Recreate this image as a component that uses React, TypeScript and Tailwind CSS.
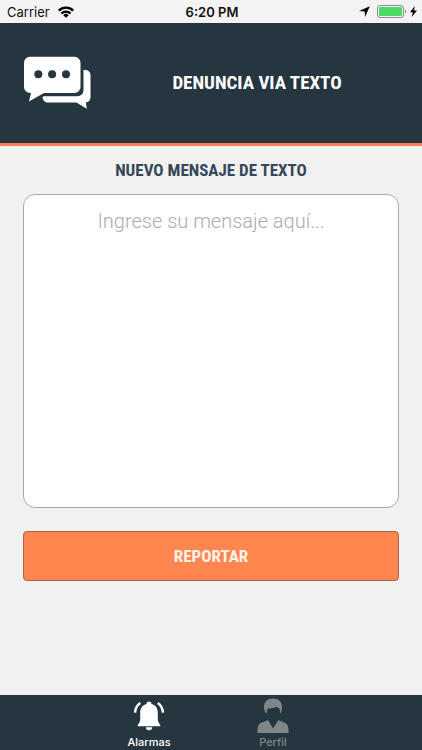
import React from 'react';

const condensed = "font-['Roboto_Condensed','Roboto',sans-serif] font-bold";

function StatusBar() {
  return (
    <div className="grid h-[23px] grid-cols-3 items-center bg-[#f3f3f3] pr-[5px] pl-[7px] font-['Inter',sans-serif] text-[13px] leading-4 text-[#111]">
      <div className="flex items-center gap-2">
        <span>Carrier</span>
        <svg width="16" height="12" viewBox="0 0 16 12" fill="none" stroke="#000" strokeWidth="2.3" aria-hidden="true">
          <path d="M0.8 4.6a10.2 10.2 0 0 1 14.4 0" />
          <path d="M3.4 7.5a6.5 6.5 0 0 1 9.2 0" />
          <path d="M8 11.8 5.3 9.2a3.8 3.8 0 0 1 5.4 0z" fill="#000" stroke="none" />
        </svg>
      </div>
      <span className="text-center font-semibold">6:20 PM</span>
      <div className="flex items-center justify-end gap-[7px]">
        <svg width="11" height="11" viewBox="0 0 11 11" aria-hidden="true">
          <path d="M10.8 0.2 6.2 10.8 5.6 5.6 0.2 5z" fill="#000" />
        </svg>
        <div className="flex items-center gap-[3px]">
          <svg width="30" height="13" viewBox="0 0 30 13" aria-hidden="true">
            <rect x="0.5" y="0.5" width="26" height="12" rx="2.5" fill="#f3f3f3" stroke="#8d8d8d" />
            <rect x="2" y="2" width="23" height="9" rx="1" fill="#4cd964" />
            <path d="M28 4.5c1.6 0.6 1.6 3.4 0 4z" fill="#8d8d8d" />
          </svg>
          <svg width="7" height="11" viewBox="0 0 7 11" aria-hidden="true">
            <path d="M4.8 0 0 6.2h2.8L1.8 11 7 4.6H4z" fill="#000" />
          </svg>
        </div>
      </div>
    </div>
  );
}

function ChatIcon() {
  return (
    <svg width="68" height="54" viewBox="0 0 68 54" fill="#fff" className="shrink-0" aria-hidden="true">
      <path d="M6 0.800h44.500a6 6 0 0 1 6 6v24.200a6 6 0 0 1-6 6H20L5 45.500 7 37H6a6 6 0 0 1-6-6V6.800a6 6 0 0 1 6-6z" />
      <path d="M59.500 14h2a5 5 0 0 1 5 5v22.500a5 5 0 0 1-4.700 5l1 6.200-10.300-6.200H24a5.500 5.500 0 0 1-5.500-5.500l1-0.800H53.500a6 6 0 0 0 6-6z" />
      <g fill="#263640">
        <circle cx="14.300" cy="18.300" r="4" />
        <circle cx="28.100" cy="18.300" r="4" />
        <circle cx="42" cy="18.300" r="4" />
      </g>
    </svg>
  );
}

function BellIcon() {
  return (
    <svg width="32" height="30" viewBox="0 0 32 30" aria-hidden="true">
      <path
        fill="#fff"
        d="M16 0.600c1.500 0 2.500 0.900 2.500 2.300 4.200 1 6.300 4.400 6.300 8.600v6c0 3.200 0.900 4.800 2.400 6.200v1.500H4.800v-1.500c1.500-1.400 2.400-3 2.400-6.200v-6c0-4.200 2.100-7.600 6.300-8.600 0-1.400 1-2.300 2.500-2.300zM12.800 26.200h6.400a3.200 3 0 0 1-6.400 0z"
      />
      <g fill="none" stroke="#fff" strokeWidth="2.500">
        <path d="M7.300 2C4.300 4 2.300 7.400 2 11.600" />
        <path d="M24.700 2c3 2 5 5.400 5.300 9.600" />
      </g>
    </svg>
  );
}

function PersonIcon() {
  return (
    <svg width="32" height="36" viewBox="0 0 32 36" fill="#808588" aria-hidden="true">
      <path d="M16 0.500c5.400 0 9 3.200 9 8.200 0 2.700-0.500 5-1.600 7.100l-1-5.600c-1.200 0-2.300-0.500-3.200-1.400-2.500 1.400-5 1.900-8.500 1.600l-1.200 5.400C7.600 13.700 7 11.400 7 8.700 7 3.700 10.600 0.500 16 0.500z" />
      <path d="M11 22 16 30.500l5.500-8.500c2.500 1.500 5.500 2.200 7.500 3.400 1.800 1 2.500 4 2.700 8.600 0 0.700-0.500 1-1 1H1.300c-0.500 0-1-0.300-1-1C0.500 29.400 1.200 26.400 3 25.400c2-1.200 5.500-1.900 8-3.400z" />
    </svg>
  );
}

export default function App() {
  return (
    <div className="flex min-h-screen flex-col bg-[#f1f1f1]">
      <StatusBar />
      <header className="flex h-[123px] items-center gap-6 border-b-[3px] border-[#f6834f] bg-[#263640] px-6">
        <ChatIcon />
        <h1 className={`${condensed} flex-1 text-center text-[19px] leading-6 text-white`}>
          DENUNCIA VIA TEXTO
        </h1>
      </header>
      <main className="flex flex-1 flex-col px-[23px] pt-3">
        <label htmlFor="mensaje" className={`${condensed} text-center text-[17px] leading-6 text-[#364858]`}>
          NUEVO MENSAJE DE TEXTO
        </label>
        <textarea
          id="mensaje"
          placeholder="Ingrese su mensaje aquí..."
          className="mt-3 block h-[314px] w-full resize-none rounded-xl border border-[#a3abb2] bg-white px-3 py-3 text-center font-['Roboto',sans-serif] text-[20px] leading-7 font-light text-[#364858] placeholder:text-[#acacac]"
        />
        <button
          type="button"
          className={`${condensed} mt-[23px] h-[50px] w-full rounded border border-[#ab6448] bg-[#ff864e] text-[17px] leading-6 text-[#fff3ea]`}
        >
          REPORTAR
        </button>
      </main>
      <nav className="flex h-[55px] justify-center gap-[60px] bg-[#263640] font-['Inter',sans-serif] text-[11px] leading-3 font-medium">
        <button type="button" className="flex w-16 flex-col items-center justify-end pb-[2px] text-white">
          <span className="mb-[2px] flex h-[36px] items-center"><BellIcon /></span>
          Alarmas
        </button>
        <button type="button" className="flex w-16 flex-col items-center justify-end pb-[2px] text-[#808588]">
          <span className="mb-[2px] flex h-[36px] items-center"><PersonIcon /></span>
          Perfil
        </button>
      </nav>
    </div>
  );
}
